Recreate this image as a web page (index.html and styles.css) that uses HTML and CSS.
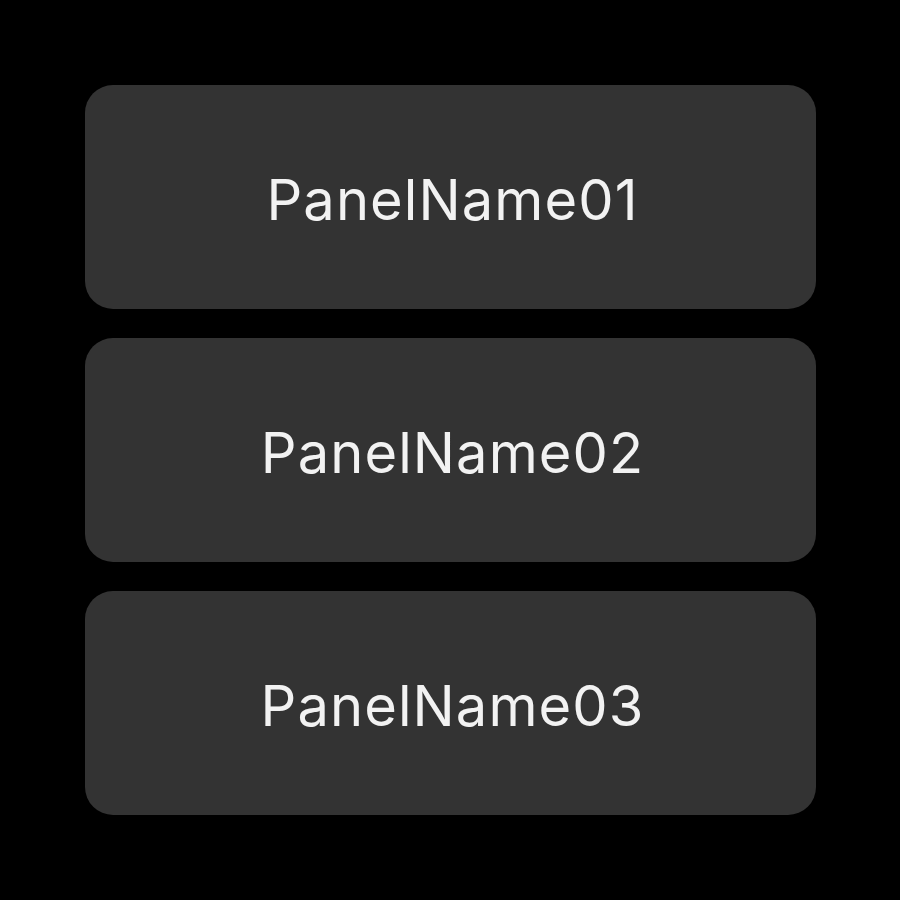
FILE: index.html
```html
<!DOCTYPE html>
<html lang="en">
<head>
    <meta charset="UTF-8">
    <title>Panels</title>
    <link rel="stylesheet" href="styles.css">
</head>
<body>
<div class="panel-list">
    <div class="panel">PanelName01</div>
    <div class="panel">PanelName02</div>
    <div class="panel">PanelName03</div>
</div>
</body>
</html>
```

FILE: styles.css
```css
body {
    margin: 0;
    background-color: #000;
    font-family: Inter, "Noto Sans", sans-serif;
}
.panel-list {
    display: flex;
    flex-direction: column;
    gap: 29px;
    padding: 85px 84px 85px 85px;
}
.panel {
    height: 224px;
    background-color: #333333;
    border-radius: 28px;
    color: #f2f2f2;
    font-size: 56px;
    letter-spacing: 1.1px;
    display: flex;
    align-items: center;
    justify-content: center;
    padding: 6px 0 0 4px;
    box-sizing: border-box;
}
```
